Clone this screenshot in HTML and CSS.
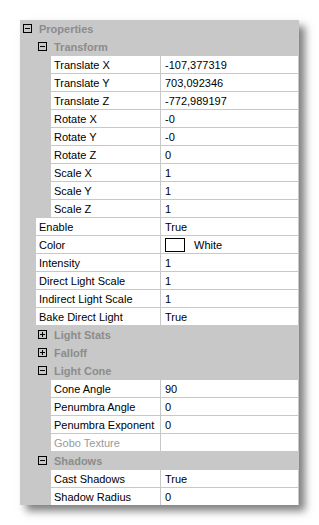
FILE: index.html
```html
<!DOCTYPE html>
<html lang="en">
<head>
    <meta charset="UTF-8">
    <title>Properties</title>
    <link rel="stylesheet" href="styles.css">
</head>
<body>
    <div class="panel">
        <div class="group lvl0"><span class="toggle minus"></span>Properties</div>
        <div class="group lvl1"><span class="toggle minus"></span>Transform</div>
        <div class="prop lvl2"><div class="name">Translate X</div><div class="value">-107,377319</div></div>
        <div class="prop lvl2"><div class="name">Translate Y</div><div class="value">703,092346</div></div>
        <div class="prop lvl2"><div class="name">Translate Z</div><div class="value">-772,989197</div></div>
        <div class="prop lvl2"><div class="name">Rotate X</div><div class="value">-0</div></div>
        <div class="prop lvl2"><div class="name">Rotate Y</div><div class="value">-0</div></div>
        <div class="prop lvl2"><div class="name">Rotate Z</div><div class="value">0</div></div>
        <div class="prop lvl2"><div class="name">Scale X</div><div class="value">1</div></div>
        <div class="prop lvl2"><div class="name">Scale Y</div><div class="value">1</div></div>
        <div class="prop lvl2"><div class="name">Scale Z</div><div class="value">1</div></div>
        <div class="prop lvl1"><div class="name">Enable</div><div class="value">True</div></div>
        <div class="prop lvl1"><div class="name">Color</div><div class="value"><span class="swatch"></span>White</div></div>
        <div class="prop lvl1"><div class="name">Intensity</div><div class="value">1</div></div>
        <div class="prop lvl1"><div class="name">Direct Light Scale</div><div class="value">1</div></div>
        <div class="prop lvl1"><div class="name">Indirect Light Scale</div><div class="value">1</div></div>
        <div class="prop lvl1"><div class="name">Bake Direct Light</div><div class="value">True</div></div>
        <div class="group lvl1"><span class="toggle plus"></span>Light Stats</div>
        <div class="group lvl1"><span class="toggle plus"></span>Falloff</div>
        <div class="group lvl1"><span class="toggle minus"></span>Light Cone</div>
        <div class="prop lvl2"><div class="name">Cone Angle</div><div class="value">90</div></div>
        <div class="prop lvl2"><div class="name">Penumbra Angle</div><div class="value">0</div></div>
        <div class="prop lvl2"><div class="name">Penumbra Exponent</div><div class="value">0</div></div>
        <div class="prop lvl2 disabled"><div class="name">Gobo Texture</div><div class="value"></div></div>
        <div class="group lvl1"><span class="toggle minus"></span>Shadows</div>
        <div class="prop lvl2"><div class="name">Cast Shadows</div><div class="value">True</div></div>
        <div class="prop lvl2"><div class="name">Shadow Radius</div><div class="value">0</div></div>
    </div>
</body>
</html>
```

FILE: styles.css
```css
body {
    margin: 0;
    padding: 20px;
    background: #fff;
    font-family: 'Liberation Sans', Arial, sans-serif;
    font-size: 11px;
    color: #000;
}
.panel {
    width: 278px;
    padding-right: 1px;
    background: #c8c8c8;
    display: flex;
    flex-direction: column;
    gap: 1px;
    box-shadow: 6px 6px 8px rgba(0, 0, 0, 0.5);
}
.group {
    height: 17px;
    display: flex;
    align-items: center;
    font-weight: bold;
    color: #8c8c8c;
}
.group.lvl0 {
    padding-left: 3px;
}
.group.lvl1 {
    padding-left: 18px;
}
.toggle {
    position: relative;
    width: 7px;
    height: 7px;
    border: 1px solid #000;
    margin-right: 7px;
}
.toggle::before {
    content: '';
    position: absolute;
    left: 1px;
    top: 3px;
    width: 5px;
    height: 1px;
    background: #000;
}
.toggle.plus::after {
    content: '';
    position: absolute;
    left: 3px;
    top: 1px;
    width: 1px;
    height: 5px;
    background: #000;
}
.prop {
    height: 17px;
    display: grid;
    grid-template-columns: 1fr 137px;
    gap: 1px;
}
.prop.lvl1 {
    margin-left: 16px;
}
.prop.lvl2 {
    margin-left: 31px;
}
.name, .value {
    background: #fff;
    display: flex;
    align-items: center;
    white-space: nowrap;
    overflow: hidden;
}
.name {
    padding-left: 3px;
}
.value {
    padding-left: 4px;
}
.disabled .name {
    color: #9a9a9a;
}
.swatch {
    width: 18px;
    height: 12px;
    border: 1px solid #000;
    background: #fff;
    margin-right: 9px;
}
```
